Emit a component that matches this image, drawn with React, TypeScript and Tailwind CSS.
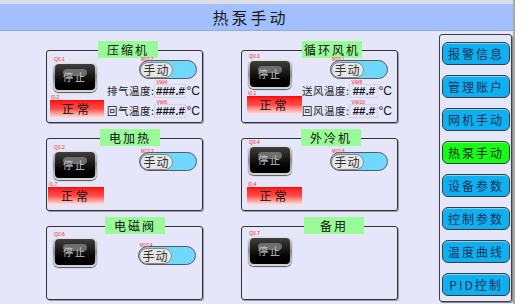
import React from "react";

const cjk = { fontFamily: '"Noto Sans CJK SC", "Noto Sans", sans-serif' };

interface PanelProps {
  title: string;
  titleCls: string;
  stopTag: string;
  stopCls: string;
  status?: { tag: string; cls: string };
  toggle?: { tag: string; cls: string };
  temps?: { label: string; value: string; tag: string; box: string }[];
}

const panels: PanelProps[] = [
  {
    title: "压缩机",
    titleCls: "left-[51px]",
    stopTag: "Q0.1",
    stopCls: "mt-[11px]",
    status: { tag: "I0.2", cls: "mt-[8px] -ml-[3px]" },
    toggle: { tag: "M13.2", cls: "mt-[9px] ml-[32px]" },
    temps: [
      { label: "排气温度:", value: "###.#", tag: "VW4", box: "w-[32px]" },
      { label: "回气温度:", value: "###.#", tag: "VW6", box: "w-[32px]" },
    ],
  },
  {
    title: "循环风机",
    titleCls: "left-[60px]",
    stopTag: "Q0.0",
    stopCls: "mt-[8px]",
    status: { tag: "I0.1", cls: "mt-[7px] -ml-[1px] w-[55px]" },
    toggle: { tag: "M10.1", cls: "mt-[9px] ml-[28px]" },
    temps: [
      { label: "送风温度:", value: "##.#", tag: "VW8", box: "w-[29px]" },
      { label: "回风温度:", value: "##.#", tag: "VW10", box: "w-[29px]" },
    ],
  },
  {
    title: "电加热",
    titleCls: "left-[53px]",
    stopTag: "Q0.2",
    stopCls: "mt-[11px]",
    status: { tag: "I1.7", cls: "mt-[7px] -ml-[5px] w-[56px]" },
    toggle: { tag: "M13.3", cls: "mt-[13px] ml-[32px]" },
  },
  {
    title: "外冷机",
    titleCls: "left-[59px]",
    stopTag: "Q0.4",
    stopCls: "mt-[6px]",
    status: { tag: "I0.4", cls: "mt-[12px] -ml-[1px] w-[55px]" },
    toggle: { tag: "M13.8", cls: "mt-[13px] ml-[28px]" },
  },
  {
    title: "电磁阀",
    titleCls: "left-[58px]",
    stopTag: "Q0.6",
    stopCls: "mt-[10px]",
    toggle: { tag: "M13.4", cls: "mt-[19px] ml-[31px]" },
  },
  {
    title: "备用",
    titleCls: "left-[62px]",
    stopTag: "Q0.7",
    stopCls: "mt-[9px]",
  },
];

const menu = ["报警信息", "管理账户", "网机手动", "热泵手动", "设备参数", "控制参数", "温度曲线", "PID控制"];

const Tag = ({ text, cls = "-top-[5px] left-[1px] text-[5px]" }: { text: string; cls?: string }) => (
  <span className={`absolute leading-none text-[#ff2020] ${cls}`} style={{ fontFamily: '"Liberation Sans", sans-serif' }}>
    {text}
  </span>
);

const StopButton = ({ tag, cls }: { tag: string; cls: string }) => (
  <div className={`relative h-[30px] w-[44px] rounded-[6px] bg-linear-to-b from-[#e8e8e8] via-[#8c8c8c] to-[#d8d8d8] p-[2px] shadow-[0_1px_1px_#555] ${cls}`}>
    <div className="relative flex h-full items-center justify-center rounded-[4px] bg-linear-to-b from-[#404040] via-[#151515] to-[#000000]">
      <div className="absolute left-[8px] right-[8px] top-[5px] h-[7px] rounded-full bg-[#6e6e6e]" />
      <span className="relative text-[10px] leading-none tracking-[2px] text-[#c4c4c4]" style={cjk}>
        停止
      </span>
    </div>
    <Tag text={tag} />
  </div>
);

const Status = ({ tag, cls }: { tag: string; cls: string }) => (
  <div className={`relative flex h-[18px] w-[54px] items-center justify-center bg-linear-to-b from-[#ff0000] via-[#ff4a4a] to-[#ffe4e4] ${cls}`}>
    <span className="text-[12px] leading-none tracking-[3px] text-[#111]" style={cjk}>
      正常
    </span>
    <Tag text={tag} />
  </div>
);

const Toggle = ({ tag, cls }: { tag: string; cls: string }) => (
  <div className={`relative flex h-[19px] w-[58px] items-center rounded-full border-[1.5px] border-[#5a5a5a] bg-[#6fd8ff] ${cls}`}>
    <div className="flex h-[16px] w-[33px] items-center justify-center rounded-full border border-[#8a8a8a] bg-[#e6e6e6]">
      <span className="text-[12px] leading-none tracking-[1px] text-[#333]" style={cjk}>
        手动
      </span>
    </div>
    <Tag text={tag} cls="-top-[3px] left-[1px] text-[4.5px]" />
  </div>
);

const Panel = ({ p }: { p: PanelProps }) => (
  <section className="relative rounded-[3px] border border-[#333] shadow-[1px_1px_0_#9a9ab0]">
    <div className={`absolute -top-[10px] flex h-[17px] w-[60px] items-center justify-center bg-[#98fb98] ${p.titleCls}`}>
      <span className="text-[12px] leading-none tracking-[2px] text-[#111]" style={cjk}>
        {p.title}
      </span>
    </div>
    <div className="flex">
      <div className="flex w-[60px] flex-col items-start pl-[6px]">
        <StopButton tag={p.stopTag} cls={p.stopCls} />
        {p.status && <Status tag={p.status.tag} cls={p.status.cls} />}
      </div>
      <div className="flex flex-col">
        {p.toggle && <Toggle tag={p.toggle.tag} cls={p.toggle.cls} />}
        {p.temps && (
          <div className="mt-[2px] flex flex-col">
            {p.temps.map((t) => (
              <div key={t.label} className="flex h-[20px] items-center">
                <span className="text-[10.5px] leading-none tracking-[0.5px] text-[#222]" style={cjk}>
                  {t.label}
                </span>
                <div className={`relative flex h-[14px] items-end justify-center border border-[#d2d2ea] ${t.box}`}>
                  <span className="text-[11.5px] font-bold leading-none text-[#111]" style={{ fontFamily: '"Liberation Sans", sans-serif' }}>
                    {t.value}
                  </span>
                  <Tag text={t.tag} />
                </div>
                <span className="text-[12px] leading-none text-[#111]" style={{ fontFamily: '"Liberation Sans", sans-serif' }}>
                  °C
                </span>
              </div>
            ))}
          </div>
        )}
      </div>
    </div>
  </section>
);

export default function App() {
  return (
    <div className="flex h-[304px] w-[528px] bg-white">
      <div className="flex h-full w-[515px] flex-col border-r-2 border-[#a8a8a8] bg-[#e6e6fa]">
        <div className="h-[4px] bg-[#dcdce6]" />
        <header className="flex h-[27px] items-center justify-center border-b border-[#8ea8e0] bg-[#a2c0ff] pr-[12px]">
          <h1 className="text-[16px] leading-none tracking-[3px] text-[#1a1a1a]" style={cjk}>
            热泵手动
          </h1>
        </header>
        <div className="flex flex-1">
          <div className="grid grid-cols-[157px_157px] grid-rows-[73px_73px_74px] gap-x-[38px] gap-y-[15px] pl-[46px] pt-[19px]">
            {panels.map((p) => (
              <Panel key={p.title} p={p} />
            ))}
          </div>
          <aside className="ml-[41px] mt-[3px] flex h-[268px] w-[73px] flex-col gap-[10px] rounded-[3px] border border-[#404040] pl-[2px] pt-[7px] shadow-[1px_1px_0_#888]">
            {menu.map((m) => (
              <button
                key={m}
                className={`flex h-[23px] w-[68px] items-center justify-center rounded-[6px] border border-[#3c3c3c] shadow-[inset_0_1px_0_rgba(255,255,255,0.45)] ${
                  m === "热泵手动" ? "bg-[#14ff14] text-[#0c2a0c]" : "bg-[#0fb0f0] text-[#14305a]"
                }`}
              >
                <span className="text-[12px] leading-none tracking-[2px]" style={cjk}>
                  {m}
                </span>
              </button>
            ))}
          </aside>
        </div>
      </div>
    </div>
  );
}
